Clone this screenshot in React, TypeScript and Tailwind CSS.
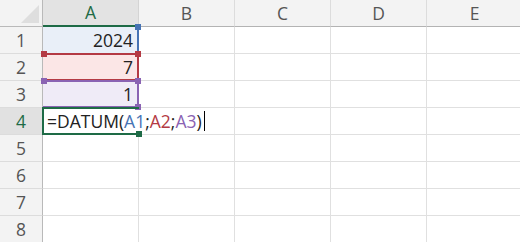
import React from "react";

const COLS = ["A", "B", "C", "D", "E"];
const ROWS = [1, 2, 3, 4, 5, 6, 7, 8];

// Column A cells carry the reference-range highlights of the formula
const A_STYLE: Record<number, string> = {
  1: "bg-[#e9eff8] border-r-2 border-r-[#4673b4] border-b border-b-[#e0e0e0]",
  2: "bg-[#fbe6e6] border-2 border-l-0 border-[#b43a44] -mt-px",
  3: "bg-[#efebf7] border-2 border-l-0 border-[#8a63b3] -mt-px",
  4: "border-2 border-r-0 border-[#1e6b46] -mt-px -ml-px",
};

function Handle({ pos, color }: { pos: string; color: string }) {
  return <span className={`absolute w-[6px] h-[6px] ${pos} ${color}`} />;
}

function Formula() {
  return (
    <span className="flex items-center whitespace-nowrap pl-[3px]">
      <span>=DATUM(</span>
      <span className="text-[#4673b4]">A1</span>
      <span>;</span>
      <span className="text-[#b43a44]">A2</span>
      <span>;</span>
      <span className="text-[#8a63b3]">A3</span>
      <span>)</span>
      <span className="ml-[2px] w-px h-[20px] bg-black" />
    </span>
  );
}

export default function App() {
  return (
    <div
      className="w-[520px] h-[242px] overflow-hidden bg-white text-[17.5px] text-[#222]"
      style={{ fontFamily: '"Open Sans", "Liberation Sans", sans-serif' }}
    >
      <div className="grid grid-cols-[43px_repeat(5,96px)] grid-rows-[27px_repeat(8,27px)]">
        {/* corner */}
        <div className="relative bg-[#f3f3f3] border-r border-b border-[#b9b9b9]">
          <div className="absolute right-[3px] bottom-[3px] w-0 h-0 border-l-[18px] border-l-transparent border-b-[18px] border-b-[#dedede]" />
        </div>
        {COLS.map((c) => (
          <div
            key={c}
            className={
              c === "A"
                ? "flex items-center justify-center bg-[#e3e3e3] text-[#1e6b46] border-r border-r-[#d4d4d4] border-b-2 border-b-[#1e6b46]"
                : "flex items-center justify-center bg-[#f3f3f3] text-[#555] border-r border-b border-r-[#dcdcdc] border-b-[#b3b3b3]"
            }
          >
            {c}
          </div>
        ))}
        {ROWS.map((r) => (
          <React.Fragment key={r}>
            <div
              className={
                r === 4
                  ? "flex items-center justify-center bg-[#e1e1e1] text-[#1e6b46] border-r border-b border-r-[#b9b9b9] border-b-[#dcdcdc]"
                  : "flex items-center justify-center bg-[#f3f3f3] text-[#555] border-r border-b border-r-[#b9b9b9] border-b-[#dcdcdc]"
              }
            >
              {r}
            </div>
            {COLS.map((c) => {
              if (c === "A" && A_STYLE[r]) {
                return (
                  <div
                    key={c}
                    className={`relative flex items-center ${
                      r === 4 ? "justify-start z-10" : "justify-end pr-[4px]"
                    } ${A_STYLE[r]}`}
                  >
                    {r === 1 && "2024"}
                    {r === 2 && "7"}
                    {r === 3 && "1"}
                    {r === 4 && <Formula />}
                    {r === 1 && <Handle pos="-right-[4px] -top-[3px]" color="bg-[#4673b4]" />}
                    {r === 2 && (
                      <>
                        <Handle pos="-left-[2px] -top-[4px]" color="bg-[#b43a44]" />
                        <Handle pos="-right-[4px] -top-[4px]" color="bg-[#b43a44]" />
                      </>
                    )}
                    {r === 3 && (
                      <>
                        <Handle pos="-left-[2px] -top-[4px]" color="bg-[#8a63b3]" />
                        <Handle pos="-right-[4px] -top-[4px]" color="bg-[#8a63b3]" />
                        <Handle pos="-right-[4px] -bottom-[4px]" color="bg-[#8a63b3]" />
                      </>
                    )}
                    {r === 4 && <Handle pos="right-[-3px] -bottom-[4px]" color="bg-[#1e6b46]" />}
                  </div>
                );
              }
              return <div key={c} className="border-b border-r border-[#e0e0e0]" />;
            })}
          </React.Fragment>
        ))}
      </div>
    </div>
  );
}
